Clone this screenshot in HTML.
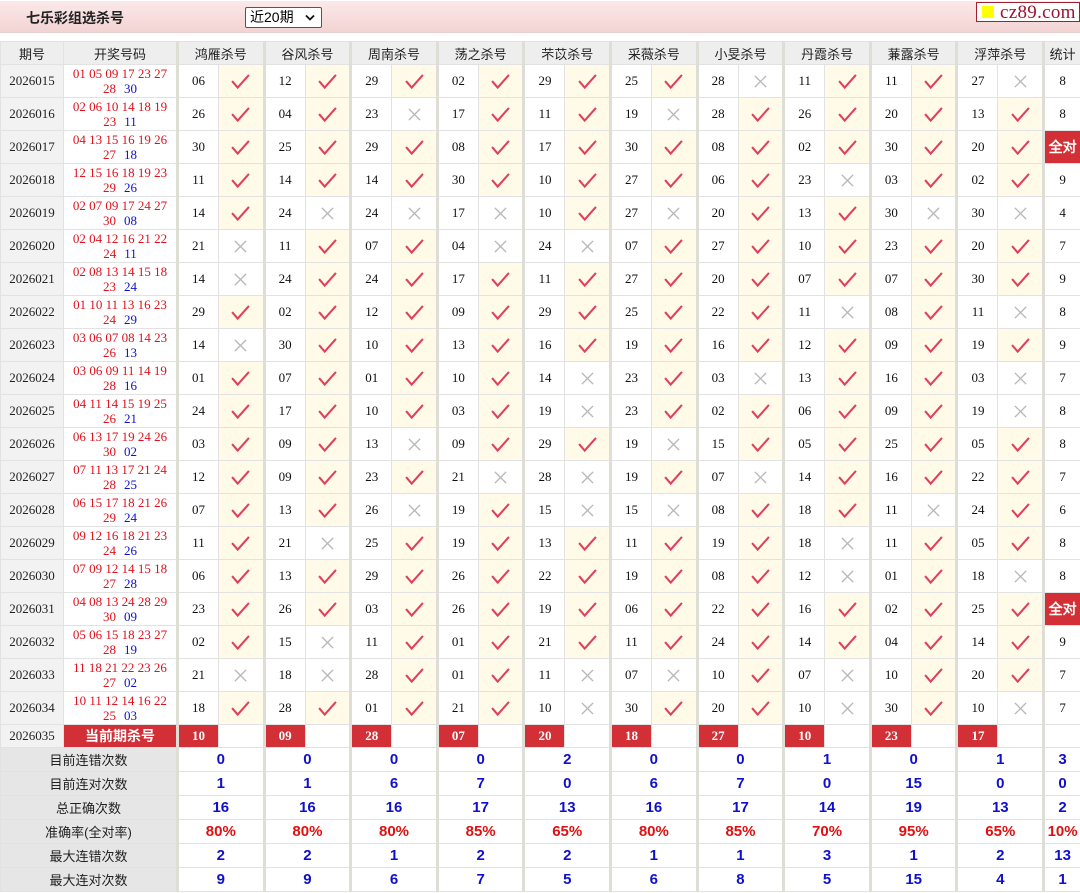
<!DOCTYPE html>
<html><head><meta charset="utf-8"><style>
*{margin:0;padding:0;box-sizing:border-box}
body{width:1080px;height:893px;background:#fff;font-family:"Liberation Sans","Noto Sans CJK SC",sans-serif;overflow:hidden;position:relative}
.top{position:absolute;left:0;top:1px;width:1080px;height:32px;background:linear-gradient(#fbe9e9,#f3d3d3);border-bottom:1px solid #e8d0d0}
.title{position:absolute;left:26px;top:7px;font-size:14px;font-weight:bold;color:#222}
.sel{position:absolute;left:245px;top:6px;width:77px;height:21px;border:1px solid #555;background:#fff;font-size:14px;line-height:19px;padding-left:4px;color:#000;border-radius:2px}
.sel svg{position:absolute;right:6px;top:6px;width:10px;height:8px}
.logo{position:absolute;left:976px;top:2px;width:104px;height:20px;background:#fff;border:1px solid #a02030;font-family:"Liberation Serif",serif;font-size:19px;color:#a01030;line-height:19px;padding-left:23px;letter-spacing:0.3px}
.logo i{position:absolute;left:5px;top:3px;width:12px;height:12px;background:#ff0}
table{position:absolute;left:0;top:41px;border-collapse:collapse;table-layout:fixed;width:1080px}
td,th{border:1px solid #e2e2e2;text-align:center;padding:0;overflow:hidden;white-space:nowrap}
th{height:23px;background:#eeeeee;font-weight:normal;font-size:13px;color:#222}
tr.d td{height:33px}
td.p{background:#f2f2f2;font-family:"Liberation Serif",serif;font-size:13px;color:#222}
td.h{font-family:"Liberation Serif",serif;font-size:13px;line-height:15px;color:#e0101c}
td.h b{font-weight:normal;color:#1010d0;margin-left:8px}
td.n{border-left:3px solid #deded6;font-family:"Liberation Serif",serif;font-size:13px;color:#111}
th.g{border-left:3px solid #deded6}
td.c{background:#fffbe8}
td.s{border-left:3px solid #deded6;font-family:"Liberation Serif",serif;font-size:13px;color:#111}
svg.k{width:19px;height:15px;display:block;margin:0 auto}
svg.x{width:15px;height:15px;display:block;margin:0 auto}
td.q{background:#d23036;color:#fff;font-weight:bold;font-size:14px}
td.r{background:#d23036;color:#fff;font-weight:bold;font-family:"Liberation Serif",serif;font-size:13px;border-left:3px solid #deded6}
tr.cur td{height:23px}
tr.st td{height:24px;font-weight:bold;font-size:15px;color:#1010cc}
tr.st td.l{background:#e6e6e6;color:#222;font-weight:normal;font-size:13px}
tr.st td.v{border-left:3px solid #deded6}
tr.st.pc td.v{color:#e01010}
</style></head><body>
<svg width="0" height="0" style="position:absolute"><defs>
<symbol id="k" viewBox="0 0 20 16"><path d="M1 7.5L7 14.5L19 1" fill="none" stroke="#e0405a" stroke-width="2.2"/></symbol>
<symbol id="x" viewBox="0 0 16 16"><path d="M2 2L14 14M14 2L2 14" stroke="#b8b8b8" stroke-width="1.4"/></symbol>
</defs></svg>
<div class="top"><div class="title">七乐彩组选杀号</div><div class="sel">近20期<svg viewBox="0 0 10 8"><path d="M1 1.5L5 5.5L9 1.5" fill="none" stroke="#111" stroke-width="1.8"/></svg></div></div>
<div class="logo"><i></i>cz89.com</div>
<table>
<colgroup><col style="width:63px"><col style="width:114px">
<col style="width:41px"><col style="width:45.6px"><col style="width:41px"><col style="width:45.6px"><col style="width:41px"><col style="width:45.6px"><col style="width:41px"><col style="width:45.6px"><col style="width:41px"><col style="width:45.6px"><col style="width:41px"><col style="width:45.6px"><col style="width:41px"><col style="width:45.6px"><col style="width:41px"><col style="width:45.6px"><col style="width:41px"><col style="width:45.6px"><col style="width:41px"><col style="width:45.6px">
<col style="width:37px"></colgroup>
<tr><th>期号</th><th>开奖号码</th><th class="g" colspan="2">鸿雁杀号</th><th class="g" colspan="2">谷风杀号</th><th class="g" colspan="2">周南杀号</th><th class="g" colspan="2">荡之杀号</th><th class="g" colspan="2">芣苡杀号</th><th class="g" colspan="2">采薇杀号</th><th class="g" colspan="2">小旻杀号</th><th class="g" colspan="2">丹霞杀号</th><th class="g" colspan="2">蒹露杀号</th><th class="g" colspan="2">浮萍杀号</th><th class="g">统计</th></tr>
<tr class="d"><td class="p">2026015</td><td class="h">01 05 09 17 23 27<br>28<b>30</b></td><td class="n">06</td><td class="c"><svg class="k"><use href="#k"/></svg></td><td class="n">12</td><td class="c"><svg class="k"><use href="#k"/></svg></td><td class="n">29</td><td class="c"><svg class="k"><use href="#k"/></svg></td><td class="n">02</td><td class="c"><svg class="k"><use href="#k"/></svg></td><td class="n">29</td><td class="c"><svg class="k"><use href="#k"/></svg></td><td class="n">25</td><td class="c"><svg class="k"><use href="#k"/></svg></td><td class="n">28</td><td><svg class="x"><use href="#x"/></svg></td><td class="n">11</td><td class="c"><svg class="k"><use href="#k"/></svg></td><td class="n">11</td><td class="c"><svg class="k"><use href="#k"/></svg></td><td class="n">27</td><td><svg class="x"><use href="#x"/></svg></td><td class="s">8</td></tr>
<tr class="d"><td class="p">2026016</td><td class="h">02 06 10 14 18 19<br>23<b>11</b></td><td class="n">26</td><td class="c"><svg class="k"><use href="#k"/></svg></td><td class="n">04</td><td class="c"><svg class="k"><use href="#k"/></svg></td><td class="n">23</td><td><svg class="x"><use href="#x"/></svg></td><td class="n">17</td><td class="c"><svg class="k"><use href="#k"/></svg></td><td class="n">11</td><td class="c"><svg class="k"><use href="#k"/></svg></td><td class="n">19</td><td><svg class="x"><use href="#x"/></svg></td><td class="n">28</td><td class="c"><svg class="k"><use href="#k"/></svg></td><td class="n">26</td><td class="c"><svg class="k"><use href="#k"/></svg></td><td class="n">20</td><td class="c"><svg class="k"><use href="#k"/></svg></td><td class="n">13</td><td class="c"><svg class="k"><use href="#k"/></svg></td><td class="s">8</td></tr>
<tr class="d"><td class="p">2026017</td><td class="h">04 13 15 16 19 26<br>27<b>18</b></td><td class="n">30</td><td class="c"><svg class="k"><use href="#k"/></svg></td><td class="n">25</td><td class="c"><svg class="k"><use href="#k"/></svg></td><td class="n">29</td><td class="c"><svg class="k"><use href="#k"/></svg></td><td class="n">08</td><td class="c"><svg class="k"><use href="#k"/></svg></td><td class="n">17</td><td class="c"><svg class="k"><use href="#k"/></svg></td><td class="n">30</td><td class="c"><svg class="k"><use href="#k"/></svg></td><td class="n">08</td><td class="c"><svg class="k"><use href="#k"/></svg></td><td class="n">02</td><td class="c"><svg class="k"><use href="#k"/></svg></td><td class="n">30</td><td class="c"><svg class="k"><use href="#k"/></svg></td><td class="n">20</td><td class="c"><svg class="k"><use href="#k"/></svg></td><td class="s q" style="border-left:3px solid #deded6">全对</td></tr>
<tr class="d"><td class="p">2026018</td><td class="h">12 15 16 18 19 23<br>29<b>26</b></td><td class="n">11</td><td class="c"><svg class="k"><use href="#k"/></svg></td><td class="n">14</td><td class="c"><svg class="k"><use href="#k"/></svg></td><td class="n">14</td><td class="c"><svg class="k"><use href="#k"/></svg></td><td class="n">30</td><td class="c"><svg class="k"><use href="#k"/></svg></td><td class="n">10</td><td class="c"><svg class="k"><use href="#k"/></svg></td><td class="n">27</td><td class="c"><svg class="k"><use href="#k"/></svg></td><td class="n">06</td><td class="c"><svg class="k"><use href="#k"/></svg></td><td class="n">23</td><td><svg class="x"><use href="#x"/></svg></td><td class="n">03</td><td class="c"><svg class="k"><use href="#k"/></svg></td><td class="n">02</td><td class="c"><svg class="k"><use href="#k"/></svg></td><td class="s">9</td></tr>
<tr class="d"><td class="p">2026019</td><td class="h">02 07 09 17 24 27<br>30<b>08</b></td><td class="n">14</td><td class="c"><svg class="k"><use href="#k"/></svg></td><td class="n">24</td><td><svg class="x"><use href="#x"/></svg></td><td class="n">24</td><td><svg class="x"><use href="#x"/></svg></td><td class="n">17</td><td><svg class="x"><use href="#x"/></svg></td><td class="n">10</td><td class="c"><svg class="k"><use href="#k"/></svg></td><td class="n">27</td><td><svg class="x"><use href="#x"/></svg></td><td class="n">20</td><td class="c"><svg class="k"><use href="#k"/></svg></td><td class="n">13</td><td class="c"><svg class="k"><use href="#k"/></svg></td><td class="n">30</td><td><svg class="x"><use href="#x"/></svg></td><td class="n">30</td><td><svg class="x"><use href="#x"/></svg></td><td class="s">4</td></tr>
<tr class="d"><td class="p">2026020</td><td class="h">02 04 12 16 21 22<br>24<b>11</b></td><td class="n">21</td><td><svg class="x"><use href="#x"/></svg></td><td class="n">11</td><td class="c"><svg class="k"><use href="#k"/></svg></td><td class="n">07</td><td class="c"><svg class="k"><use href="#k"/></svg></td><td class="n">04</td><td><svg class="x"><use href="#x"/></svg></td><td class="n">24</td><td><svg class="x"><use href="#x"/></svg></td><td class="n">07</td><td class="c"><svg class="k"><use href="#k"/></svg></td><td class="n">27</td><td class="c"><svg class="k"><use href="#k"/></svg></td><td class="n">10</td><td class="c"><svg class="k"><use href="#k"/></svg></td><td class="n">23</td><td class="c"><svg class="k"><use href="#k"/></svg></td><td class="n">20</td><td class="c"><svg class="k"><use href="#k"/></svg></td><td class="s">7</td></tr>
<tr class="d"><td class="p">2026021</td><td class="h">02 08 13 14 15 18<br>23<b>24</b></td><td class="n">14</td><td><svg class="x"><use href="#x"/></svg></td><td class="n">24</td><td class="c"><svg class="k"><use href="#k"/></svg></td><td class="n">24</td><td class="c"><svg class="k"><use href="#k"/></svg></td><td class="n">17</td><td class="c"><svg class="k"><use href="#k"/></svg></td><td class="n">11</td><td class="c"><svg class="k"><use href="#k"/></svg></td><td class="n">27</td><td class="c"><svg class="k"><use href="#k"/></svg></td><td class="n">20</td><td class="c"><svg class="k"><use href="#k"/></svg></td><td class="n">07</td><td class="c"><svg class="k"><use href="#k"/></svg></td><td class="n">07</td><td class="c"><svg class="k"><use href="#k"/></svg></td><td class="n">30</td><td class="c"><svg class="k"><use href="#k"/></svg></td><td class="s">9</td></tr>
<tr class="d"><td class="p">2026022</td><td class="h">01 10 11 13 16 23<br>24<b>29</b></td><td class="n">29</td><td class="c"><svg class="k"><use href="#k"/></svg></td><td class="n">02</td><td class="c"><svg class="k"><use href="#k"/></svg></td><td class="n">12</td><td class="c"><svg class="k"><use href="#k"/></svg></td><td class="n">09</td><td class="c"><svg class="k"><use href="#k"/></svg></td><td class="n">29</td><td class="c"><svg class="k"><use href="#k"/></svg></td><td class="n">25</td><td class="c"><svg class="k"><use href="#k"/></svg></td><td class="n">22</td><td class="c"><svg class="k"><use href="#k"/></svg></td><td class="n">11</td><td><svg class="x"><use href="#x"/></svg></td><td class="n">08</td><td class="c"><svg class="k"><use href="#k"/></svg></td><td class="n">11</td><td><svg class="x"><use href="#x"/></svg></td><td class="s">8</td></tr>
<tr class="d"><td class="p">2026023</td><td class="h">03 06 07 08 14 23<br>26<b>13</b></td><td class="n">14</td><td><svg class="x"><use href="#x"/></svg></td><td class="n">30</td><td class="c"><svg class="k"><use href="#k"/></svg></td><td class="n">10</td><td class="c"><svg class="k"><use href="#k"/></svg></td><td class="n">13</td><td class="c"><svg class="k"><use href="#k"/></svg></td><td class="n">16</td><td class="c"><svg class="k"><use href="#k"/></svg></td><td class="n">19</td><td class="c"><svg class="k"><use href="#k"/></svg></td><td class="n">16</td><td class="c"><svg class="k"><use href="#k"/></svg></td><td class="n">12</td><td class="c"><svg class="k"><use href="#k"/></svg></td><td class="n">09</td><td class="c"><svg class="k"><use href="#k"/></svg></td><td class="n">19</td><td class="c"><svg class="k"><use href="#k"/></svg></td><td class="s">9</td></tr>
<tr class="d"><td class="p">2026024</td><td class="h">03 06 09 11 14 19<br>28<b>16</b></td><td class="n">01</td><td class="c"><svg class="k"><use href="#k"/></svg></td><td class="n">07</td><td class="c"><svg class="k"><use href="#k"/></svg></td><td class="n">01</td><td class="c"><svg class="k"><use href="#k"/></svg></td><td class="n">10</td><td class="c"><svg class="k"><use href="#k"/></svg></td><td class="n">14</td><td><svg class="x"><use href="#x"/></svg></td><td class="n">23</td><td class="c"><svg class="k"><use href="#k"/></svg></td><td class="n">03</td><td><svg class="x"><use href="#x"/></svg></td><td class="n">13</td><td class="c"><svg class="k"><use href="#k"/></svg></td><td class="n">16</td><td class="c"><svg class="k"><use href="#k"/></svg></td><td class="n">03</td><td><svg class="x"><use href="#x"/></svg></td><td class="s">7</td></tr>
<tr class="d"><td class="p">2026025</td><td class="h">04 11 14 15 19 25<br>26<b>21</b></td><td class="n">24</td><td class="c"><svg class="k"><use href="#k"/></svg></td><td class="n">17</td><td class="c"><svg class="k"><use href="#k"/></svg></td><td class="n">10</td><td class="c"><svg class="k"><use href="#k"/></svg></td><td class="n">03</td><td class="c"><svg class="k"><use href="#k"/></svg></td><td class="n">19</td><td><svg class="x"><use href="#x"/></svg></td><td class="n">23</td><td class="c"><svg class="k"><use href="#k"/></svg></td><td class="n">02</td><td class="c"><svg class="k"><use href="#k"/></svg></td><td class="n">06</td><td class="c"><svg class="k"><use href="#k"/></svg></td><td class="n">09</td><td class="c"><svg class="k"><use href="#k"/></svg></td><td class="n">19</td><td><svg class="x"><use href="#x"/></svg></td><td class="s">8</td></tr>
<tr class="d"><td class="p">2026026</td><td class="h">06 13 17 19 24 26<br>30<b>02</b></td><td class="n">03</td><td class="c"><svg class="k"><use href="#k"/></svg></td><td class="n">09</td><td class="c"><svg class="k"><use href="#k"/></svg></td><td class="n">13</td><td><svg class="x"><use href="#x"/></svg></td><td class="n">09</td><td class="c"><svg class="k"><use href="#k"/></svg></td><td class="n">29</td><td class="c"><svg class="k"><use href="#k"/></svg></td><td class="n">19</td><td><svg class="x"><use href="#x"/></svg></td><td class="n">15</td><td class="c"><svg class="k"><use href="#k"/></svg></td><td class="n">05</td><td class="c"><svg class="k"><use href="#k"/></svg></td><td class="n">25</td><td class="c"><svg class="k"><use href="#k"/></svg></td><td class="n">05</td><td class="c"><svg class="k"><use href="#k"/></svg></td><td class="s">8</td></tr>
<tr class="d"><td class="p">2026027</td><td class="h">07 11 13 17 21 24<br>28<b>25</b></td><td class="n">12</td><td class="c"><svg class="k"><use href="#k"/></svg></td><td class="n">09</td><td class="c"><svg class="k"><use href="#k"/></svg></td><td class="n">23</td><td class="c"><svg class="k"><use href="#k"/></svg></td><td class="n">21</td><td><svg class="x"><use href="#x"/></svg></td><td class="n">28</td><td><svg class="x"><use href="#x"/></svg></td><td class="n">19</td><td class="c"><svg class="k"><use href="#k"/></svg></td><td class="n">07</td><td><svg class="x"><use href="#x"/></svg></td><td class="n">14</td><td class="c"><svg class="k"><use href="#k"/></svg></td><td class="n">16</td><td class="c"><svg class="k"><use href="#k"/></svg></td><td class="n">22</td><td class="c"><svg class="k"><use href="#k"/></svg></td><td class="s">7</td></tr>
<tr class="d"><td class="p">2026028</td><td class="h">06 15 17 18 21 26<br>29<b>24</b></td><td class="n">07</td><td class="c"><svg class="k"><use href="#k"/></svg></td><td class="n">13</td><td class="c"><svg class="k"><use href="#k"/></svg></td><td class="n">26</td><td><svg class="x"><use href="#x"/></svg></td><td class="n">19</td><td class="c"><svg class="k"><use href="#k"/></svg></td><td class="n">15</td><td><svg class="x"><use href="#x"/></svg></td><td class="n">15</td><td><svg class="x"><use href="#x"/></svg></td><td class="n">08</td><td class="c"><svg class="k"><use href="#k"/></svg></td><td class="n">18</td><td class="c"><svg class="k"><use href="#k"/></svg></td><td class="n">11</td><td><svg class="x"><use href="#x"/></svg></td><td class="n">24</td><td class="c"><svg class="k"><use href="#k"/></svg></td><td class="s">6</td></tr>
<tr class="d"><td class="p">2026029</td><td class="h">09 12 16 18 21 23<br>24<b>26</b></td><td class="n">11</td><td class="c"><svg class="k"><use href="#k"/></svg></td><td class="n">21</td><td><svg class="x"><use href="#x"/></svg></td><td class="n">25</td><td class="c"><svg class="k"><use href="#k"/></svg></td><td class="n">19</td><td class="c"><svg class="k"><use href="#k"/></svg></td><td class="n">13</td><td class="c"><svg class="k"><use href="#k"/></svg></td><td class="n">11</td><td class="c"><svg class="k"><use href="#k"/></svg></td><td class="n">19</td><td class="c"><svg class="k"><use href="#k"/></svg></td><td class="n">18</td><td><svg class="x"><use href="#x"/></svg></td><td class="n">11</td><td class="c"><svg class="k"><use href="#k"/></svg></td><td class="n">05</td><td class="c"><svg class="k"><use href="#k"/></svg></td><td class="s">8</td></tr>
<tr class="d"><td class="p">2026030</td><td class="h">07 09 12 14 15 18<br>27<b>28</b></td><td class="n">06</td><td class="c"><svg class="k"><use href="#k"/></svg></td><td class="n">13</td><td class="c"><svg class="k"><use href="#k"/></svg></td><td class="n">29</td><td class="c"><svg class="k"><use href="#k"/></svg></td><td class="n">26</td><td class="c"><svg class="k"><use href="#k"/></svg></td><td class="n">22</td><td class="c"><svg class="k"><use href="#k"/></svg></td><td class="n">19</td><td class="c"><svg class="k"><use href="#k"/></svg></td><td class="n">08</td><td class="c"><svg class="k"><use href="#k"/></svg></td><td class="n">12</td><td><svg class="x"><use href="#x"/></svg></td><td class="n">01</td><td class="c"><svg class="k"><use href="#k"/></svg></td><td class="n">18</td><td><svg class="x"><use href="#x"/></svg></td><td class="s">8</td></tr>
<tr class="d"><td class="p">2026031</td><td class="h">04 08 13 24 28 29<br>30<b>09</b></td><td class="n">23</td><td class="c"><svg class="k"><use href="#k"/></svg></td><td class="n">26</td><td class="c"><svg class="k"><use href="#k"/></svg></td><td class="n">03</td><td class="c"><svg class="k"><use href="#k"/></svg></td><td class="n">26</td><td class="c"><svg class="k"><use href="#k"/></svg></td><td class="n">19</td><td class="c"><svg class="k"><use href="#k"/></svg></td><td class="n">06</td><td class="c"><svg class="k"><use href="#k"/></svg></td><td class="n">22</td><td class="c"><svg class="k"><use href="#k"/></svg></td><td class="n">16</td><td class="c"><svg class="k"><use href="#k"/></svg></td><td class="n">02</td><td class="c"><svg class="k"><use href="#k"/></svg></td><td class="n">25</td><td class="c"><svg class="k"><use href="#k"/></svg></td><td class="s q" style="border-left:3px solid #deded6">全对</td></tr>
<tr class="d"><td class="p">2026032</td><td class="h">05 06 15 18 23 27<br>28<b>19</b></td><td class="n">02</td><td class="c"><svg class="k"><use href="#k"/></svg></td><td class="n">15</td><td><svg class="x"><use href="#x"/></svg></td><td class="n">11</td><td class="c"><svg class="k"><use href="#k"/></svg></td><td class="n">01</td><td class="c"><svg class="k"><use href="#k"/></svg></td><td class="n">21</td><td class="c"><svg class="k"><use href="#k"/></svg></td><td class="n">11</td><td class="c"><svg class="k"><use href="#k"/></svg></td><td class="n">24</td><td class="c"><svg class="k"><use href="#k"/></svg></td><td class="n">14</td><td class="c"><svg class="k"><use href="#k"/></svg></td><td class="n">04</td><td class="c"><svg class="k"><use href="#k"/></svg></td><td class="n">14</td><td class="c"><svg class="k"><use href="#k"/></svg></td><td class="s">9</td></tr>
<tr class="d"><td class="p">2026033</td><td class="h">11 18 21 22 23 26<br>27<b>02</b></td><td class="n">21</td><td><svg class="x"><use href="#x"/></svg></td><td class="n">18</td><td><svg class="x"><use href="#x"/></svg></td><td class="n">28</td><td class="c"><svg class="k"><use href="#k"/></svg></td><td class="n">01</td><td class="c"><svg class="k"><use href="#k"/></svg></td><td class="n">11</td><td><svg class="x"><use href="#x"/></svg></td><td class="n">07</td><td><svg class="x"><use href="#x"/></svg></td><td class="n">10</td><td class="c"><svg class="k"><use href="#k"/></svg></td><td class="n">07</td><td><svg class="x"><use href="#x"/></svg></td><td class="n">10</td><td class="c"><svg class="k"><use href="#k"/></svg></td><td class="n">20</td><td class="c"><svg class="k"><use href="#k"/></svg></td><td class="s">7</td></tr>
<tr class="d"><td class="p">2026034</td><td class="h">10 11 12 14 16 22<br>25<b>03</b></td><td class="n">18</td><td class="c"><svg class="k"><use href="#k"/></svg></td><td class="n">28</td><td class="c"><svg class="k"><use href="#k"/></svg></td><td class="n">01</td><td class="c"><svg class="k"><use href="#k"/></svg></td><td class="n">21</td><td class="c"><svg class="k"><use href="#k"/></svg></td><td class="n">10</td><td><svg class="x"><use href="#x"/></svg></td><td class="n">30</td><td class="c"><svg class="k"><use href="#k"/></svg></td><td class="n">20</td><td class="c"><svg class="k"><use href="#k"/></svg></td><td class="n">10</td><td><svg class="x"><use href="#x"/></svg></td><td class="n">30</td><td class="c"><svg class="k"><use href="#k"/></svg></td><td class="n">10</td><td><svg class="x"><use href="#x"/></svg></td><td class="s">7</td></tr>
<tr class="cur"><td class="p">2026035</td><td class="q">当前期杀号</td><td class="r">10</td><td></td><td class="r">09</td><td></td><td class="r">28</td><td></td><td class="r">07</td><td></td><td class="r">20</td><td></td><td class="r">18</td><td></td><td class="r">27</td><td></td><td class="r">10</td><td></td><td class="r">23</td><td></td><td class="r">17</td><td></td><td class="s"></td></tr>
<tr class="st"><td class="l" colspan="2">目前连错次数</td><td class="v" colspan="2">0</td><td class="v" colspan="2">0</td><td class="v" colspan="2">0</td><td class="v" colspan="2">0</td><td class="v" colspan="2">2</td><td class="v" colspan="2">0</td><td class="v" colspan="2">0</td><td class="v" colspan="2">1</td><td class="v" colspan="2">0</td><td class="v" colspan="2">1</td><td class="v">3</td></tr>
<tr class="st"><td class="l" colspan="2">目前连对次数</td><td class="v" colspan="2">1</td><td class="v" colspan="2">1</td><td class="v" colspan="2">6</td><td class="v" colspan="2">7</td><td class="v" colspan="2">0</td><td class="v" colspan="2">6</td><td class="v" colspan="2">7</td><td class="v" colspan="2">0</td><td class="v" colspan="2">15</td><td class="v" colspan="2">0</td><td class="v">0</td></tr>
<tr class="st"><td class="l" colspan="2">总正确次数</td><td class="v" colspan="2">16</td><td class="v" colspan="2">16</td><td class="v" colspan="2">16</td><td class="v" colspan="2">17</td><td class="v" colspan="2">13</td><td class="v" colspan="2">16</td><td class="v" colspan="2">17</td><td class="v" colspan="2">14</td><td class="v" colspan="2">19</td><td class="v" colspan="2">13</td><td class="v">2</td></tr>
<tr class="st pc"><td class="l" colspan="2">准确率(全对率)</td><td class="v" colspan="2">80%</td><td class="v" colspan="2">80%</td><td class="v" colspan="2">80%</td><td class="v" colspan="2">85%</td><td class="v" colspan="2">65%</td><td class="v" colspan="2">80%</td><td class="v" colspan="2">85%</td><td class="v" colspan="2">70%</td><td class="v" colspan="2">95%</td><td class="v" colspan="2">65%</td><td class="v">10%</td></tr>
<tr class="st"><td class="l" colspan="2">最大连错次数</td><td class="v" colspan="2">2</td><td class="v" colspan="2">2</td><td class="v" colspan="2">1</td><td class="v" colspan="2">2</td><td class="v" colspan="2">2</td><td class="v" colspan="2">1</td><td class="v" colspan="2">1</td><td class="v" colspan="2">3</td><td class="v" colspan="2">1</td><td class="v" colspan="2">2</td><td class="v">13</td></tr>
<tr class="st"><td class="l" colspan="2">最大连对次数</td><td class="v" colspan="2">9</td><td class="v" colspan="2">9</td><td class="v" colspan="2">6</td><td class="v" colspan="2">7</td><td class="v" colspan="2">5</td><td class="v" colspan="2">6</td><td class="v" colspan="2">8</td><td class="v" colspan="2">5</td><td class="v" colspan="2">15</td><td class="v" colspan="2">4</td><td class="v">1</td></tr>
</table>
</body></html>
